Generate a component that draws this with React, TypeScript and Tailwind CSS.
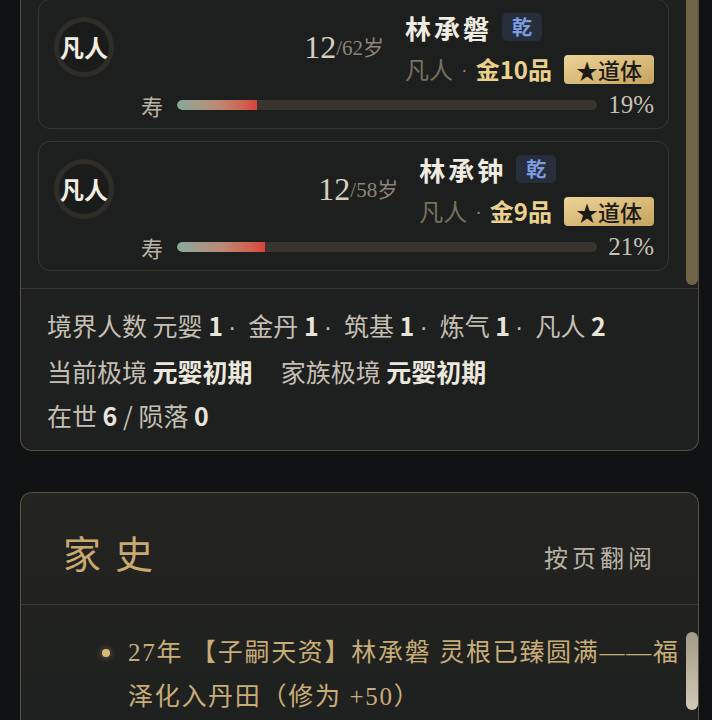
import * as React from "react";

type Member = {
  name: string;
  age: number;
  life: number;
  realm: string;
  root: string;
  pct: number;
};

const members: Member[] = [
  { name: "林承磐", age: 12, life: 62, realm: "凡人", root: "金10品", pct: 19 },
  { name: "林承钟", age: 12, life: 58, realm: "凡人", root: "金9品", pct: 21 },
];

const sans = "font-['Noto_Sans_CJK_SC',sans-serif]";
const serif = "font-['Liberation_Serif','Noto_Sans_CJK_SC',serif]";

function Dot() {
  return <span className="ml-[5px] mr-[12px] font-['Liberation_Sans',sans-serif]">·</span>;
}

function Num({ children }: { children: React.ReactNode }) {
  return <b className="font-bold text-[#e8e4da]">{children}</b>;
}

export default function App() {
  return (
    <div className={`min-h-screen w-[712px] bg-[#111213] pb-10 ${sans}`}>
      {/* roster panel, scrolled down so its top is hidden */}
      <section className="ml-[20px] w-[679px] rounded-b-[12px] border border-t-0 border-[#564f3e] bg-[#1e201f]">
        <div className="flex h-[288px] overflow-hidden">
          <div className="min-w-0 flex-1 px-[17px]">
            <div className="-mt-[1px] flex flex-col gap-[12px]">
              {members.map((m) => (
                <MemberCard key={m.name} m={m} />
              ))}
            </div>
          </div>
          <div className="w-[12px] shrink-0">
            <div className="h-[285px] w-full rounded-b-full bg-[#6e6549]" />
          </div>
        </div>
        <div className="border-t border-[#3a3a33] px-[26px] pt-[14px] pb-[13px] text-[25px] leading-[44px] text-[#c4bfb3]">
          <div>
            境界人数 元婴 <Num>1</Num>
            <Dot />金丹 <Num>1</Num>
            <Dot />筑基 <Num>1</Num>
            <Dot />炼气 <Num>1</Num>
            <Dot />凡人 <Num>2</Num>
          </div>
          <div>
            当前极境 <b className="font-bold text-[#ece8de]">元婴初期</b>
            <span className="ml-[28px]">家族极境 </span>
            <b className="font-bold text-[#ece8de]">元婴初期</b>
          </div>
          <div>
            在世 <Num>6</Num> / 陨落 <Num>0</Num>
          </div>
        </div>
      </section>

      {/* family history */}
      <section className="mt-[41px] ml-[20px] w-[679px] rounded-t-[12px] border border-b-0 border-[#5a5442] bg-gradient-to-b from-[#232421] to-[#1e201f]">
        <header className="flex h-[112px] items-center justify-between border-b border-[#3b3a34] px-[42px] pt-[6px]">
          <h2 className="text-[38px] tracking-[14px] text-[#c9a96e]">家史</h2>
          <span className="mt-[10px] text-[24px] tracking-[4px] text-[#b9b3a5]">按页翻阅</span>
        </header>
        <div className="flex h-[140px] overflow-hidden">
          <ul className="min-w-0 flex-1 pt-[26px] pl-[81px]">
            <li className="flex items-start gap-[18px]">
              <span className="mt-[18px] h-[8px] w-[8px] shrink-0 rounded-full bg-[#d8b878] shadow-[0_0_6px_rgba(216,184,120,0.6)]" />
              <p className={`min-w-0 flex-1 text-[25px] leading-[44px] tracking-[1.7px] text-[#c8ad78] ${serif}`}>
                27年 【子嗣天资】林承磐 灵根已臻圆满——福泽化入丹田（修为 +50）
              </p>
            </li>
          </ul>
          <div className="w-[12px] shrink-0 pt-[27px]">
            <div className="h-[78px] w-full rounded-full bg-gradient-to-b from-[#a39b85] to-[#d2cab6]" />
          </div>
        </div>
      </section>
    </div>
  );
}

function MemberCard({ m }: { m: Member }) {
  return (
    <div className="flex h-[130px] flex-col rounded-[12px] border border-[#38372f] bg-[#1d1f1e] pt-[11px] pr-[14px] pl-[15px]">
      <div className="flex items-start">
        <div className="mt-[6px] flex h-[60px] w-[60px] shrink-0 items-center justify-center rounded-full bg-[#2e2d28]">
          <div className="flex h-[50px] w-[50px] items-center justify-center rounded-full bg-[#1a1b1b] text-[24px] font-bold whitespace-nowrap text-[#f2ede2]">
            凡人
          </div>
        </div>
        <div className={`flex h-[72px] flex-1 items-center justify-end pr-[21px] ${serif}`}>
          <span className="text-[32px] text-[#d6cebf]">{m.age}</span>
          <span className="mt-[4px] text-[21px] text-[#8c8577]">/{m.life}岁</span>
        </div>
        <div className="flex flex-col">
          <div className="flex h-[32px] items-center gap-[10px]">
            <span className="text-[26px] font-bold tracking-[3px] text-[#f0ebe0]">{m.name}</span>
            <span className="flex h-[28px] items-center rounded-[5px] bg-[#262d3b] px-[10px] text-[20px] font-bold text-[#7d9be0]">
              乾
            </span>
          </div>
          <div className="mt-[11px] flex h-[30px] items-center whitespace-nowrap">
            <span className="text-[24px] text-[#77715f]">{m.realm}</span>
            <span className="mx-[8px] font-['Liberation_Sans',sans-serif] text-[20px] text-[#8a8475]">·</span>
            <span className="text-[24px] font-bold text-[#ead28e]">{m.root}</span>
            <span className="ml-[12px] flex h-[29px] items-center rounded-[4px] bg-gradient-to-br from-[#ecd498] to-[#c6a35e] px-[12px] text-[22px] font-medium text-[#1c1a14]">
              ★道体
            </span>
          </div>
        </div>
      </div>
      <div className="mt-[10px] flex h-[22px] items-center pl-[87px]">
        <span className="text-[22px] text-[#b8b2a5]">寿</span>
        <div className="ml-[14px] h-[10px] flex-1 overflow-hidden rounded-full bg-[#38352e]">
          <div
            className="h-full rounded-l-full bg-gradient-to-r from-[#86aa9a] via-[#b98a76] to-[#d8443a]"
            style={{ width: `${m.pct}%` }}
          />
        </div>
        <span className={`ml-[11px] text-[25px] text-[#c8c0b0] ${serif}`}>{m.pct}%</span>
      </div>
    </div>
  );
}
